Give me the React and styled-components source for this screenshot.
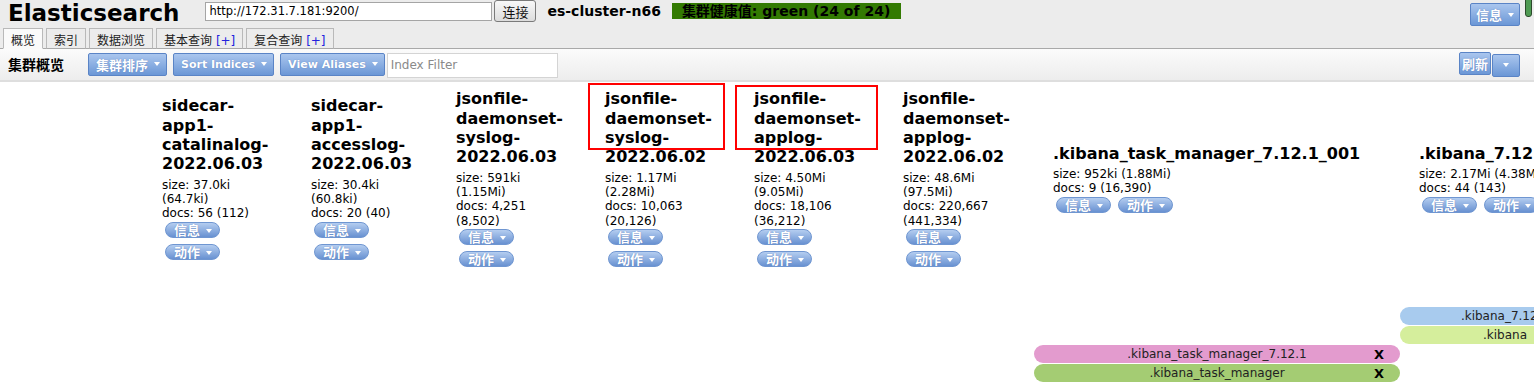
import React from 'react';
import styled, { createGlobalStyle } from 'styled-components';

const FONT = `"DejaVu Sans", "Noto Sans CJK SC", sans-serif`;

const Global = createGlobalStyle`
  html, body { margin: 0; padding: 0; background: #fff; overflow: hidden; }
  body { font-family: ${FONT}; font-size: 12px; color: #000; }
  * { box-sizing: border-box; }
`;

const Page = styled.div`
  position: relative;
  width: 1534px;
  height: 382px;
  overflow: hidden;
`;

const Header = styled.header`
  background: #ececec;
  display: flex;
  flex-direction: column;
`;

const TopBar = styled.div`
  display: flex;
  align-items: flex-start;
  height: 27px;
`;

const Title = styled.h1`
  margin: 0 26px 0 8px;
  font-size: 23px;
  line-height: 26px;
  font-weight: bold;
`;

const UrlInput = styled.div`
  width: 287px;
  height: 19px;
  margin-top: 2px;
  background: #fff;
  border: 1px solid #a5a5a5;
  font-size: 11.5px;
  line-height: 17px;
  padding-left: 3px;
  color: #000;
`;

const ConnectButton = styled.button`
  margin-left: 2px;
  margin-top: 0;
  width: 42px;
  height: 22px;
  border: 1px solid #7a7a7a;
  border-radius: 3px;
  background: linear-gradient(#f8f8f8, #dcdcdc);
  font-family: ${FONT};
  font-size: 13px;
  color: #111;
  padding: 0;
`;

const ClusterName = styled.span`
  margin-left: 11px;
  font-size: 14px;
  font-weight: bold;
  line-height: 22px;
`;

const Health = styled.span`
  margin-left: 11px;
  margin-top: 3px;
  height: 16px;
  padding: 0 11px 0 10px;
  background: ${p => p.$color};
  font-size: 14px;
  font-weight: bold;
  line-height: 16px;
  color: #000;
`;

const Spacer = styled.div`
  flex: 1;
`;

const TabBar = styled.nav`
  display: flex;
  align-items: flex-end;
  gap: 3px;
  height: 22px;
  padding-left: 3px;
  border-bottom: 1px solid #a9a9a9;
`;

const Tab = styled.div`
  height: 21px;
  padding: 4px 7px 0;
  margin-bottom: -1px;
  border: 1px solid #b9b9b9;
  border-bottom-color: ${p => (p.$active ? '#fafafa' : '#a9a9a9')};
  background: ${p => (p.$active ? '#fafafa' : '#ececec')};
  font-size: 12px;
  line-height: 16px;
  color: #222;
  white-space: nowrap;
`;

const Plus = styled.span`
  color: #2222dd;
`;

const Toolbar = styled.div`
  display: flex;
  align-items: center;
  height: 33px;
  padding: 0 14px 1px 8px;
  background: linear-gradient(#fbfbfb, #ededed);
  border-bottom: 2px solid #dedede;
`;

const ToolbarTitle = styled.span`
  font-size: 14px;
  font-weight: bold;
  margin-right: 24px;
`;

const BlueButton = styled.button`
  display: inline-flex;
  align-items: center;
  height: 23px;
  padding: 0 ${p => p.$pr ?? 6}px 0 ${p => p.$pl ?? 7}px;
  margin: ${p => p.$mt ?? 0}px ${p => p.$mr ?? 6}px 0 0;
  border: 1px solid #5a84c6;
  border-radius: 2px;
  background: linear-gradient(#aac6ee, #6b97d6);
  color: #fff;
  font-family: ${FONT};
  font-weight: bold;
  font-size: ${p => (p.$cjk ? 13 : 11)}px;
  text-shadow: 0 0 1px rgba(50, 80, 150, 0.6);
  white-space: nowrap;
`;

const Arrow = styled.span`
  display: inline-block;
  width: 0;
  height: 0;
  margin-left: ${p => p.$gap ?? 6}px;
  border-left: 3.5px solid transparent;
  border-right: 3.5px solid transparent;
  border-top: 4px solid #fff;
`;

const FilterInput = styled.div`
  width: 171px;
  height: 25px;
  margin-top: 2px;
  background: #fff;
  border: 1px solid #d4d4d4;
  color: #8a8a8a;
  font-size: 12px;
  line-height: 23px;
  padding-left: 3px;
`;

const SplitGroup = styled.div`
  display: flex;
  align-items: flex-start;
  height: 25px;
`;

const Board = styled.div`
  position: relative;
  display: grid;
  grid-template-columns: ${p => p.$cols};
  grid-template-rows: 192px 33px repeat(4, 19px);
  width: max-content;
`;

const IndexCell = styled.div`
  grid-row: 1;
  grid-column: ${p => p.$col};
  align-self: center;
  padding: 0 20px 0 19px;
`;

const IndexName = styled.div`
  font-size: 16px;
  font-weight: bold;
  line-height: 19.4px;
`;

const Stats = styled.div`
  margin-top: 4px;
  font-size: 12px;
  line-height: 14.3px;
`;

const Actions = styled.div`
  display: flex;
  flex-wrap: wrap;
  row-gap: 6px;
  column-gap: 7px;
  margin-top: 1px;
  padding-left: 3px;
`;

const Pill = styled.button`
  display: inline-flex;
  align-items: center;
  height: 16px;
  margin: 0;
  padding: 2px 7px 0 8px;
  overflow: hidden;
  border: 1px solid #6f96d1;
  border-radius: 8px;
  background: linear-gradient(#b4cdf0, #6891d1);
  color: #fff;
  font-family: ${FONT};
  font-weight: bold;
  font-size: 13px;
  line-height: 16px;
  text-shadow: 0 0 1px rgba(50, 80, 150, 0.6);
`;

const AliasBar = styled.div`
  grid-column: ${p => p.$col};
  grid-row: ${p => p.$row};
  align-self: start;
  display: grid;
  grid-template-columns: 30px 1fr 30px;
  align-items: center;
  height: 18px;
  border-radius: 9px;
  background: ${p => p.$bg};
  font-size: 12px;
  color: #222;
`;

const AliasName = styled.span`
  grid-column: 2;
  text-align: center;
  white-space: nowrap;
`;

const AliasClose = styled.span`
  grid-column: 3;
  padding-left: 4px;
  font-size: 13px;
  font-weight: bold;
  color: #000;
`;

const Highlight = styled.div`
  position: absolute;
  left: ${p => p.$x}px;
  top: ${p => p.$y}px;
  width: ${p => p.$w}px;
  height: ${p => p.$h}px;
  border: 2px solid #f00;
  pointer-events: none;
`;

const Handle = styled.div`
  position: absolute;
  left: 1525px;
  top: -3px;
  width: 7px;
  height: 20px;
  border: 1px solid #2c4a2c;
  border-radius: 3px;
  background: #4e9a52;
`;

const indices = [
  { name: 'sidecar-app1-catalinalog-2022.06.03', size: '37.0ki', total: '64.7ki', docs: '56', docsTotal: '112', w: 149 },
  { name: 'sidecar-app1-accesslog-2022.06.03', size: '30.4ki', total: '60.8ki', docs: '20', docsTotal: '40', w: 145 },
  { name: 'jsonfile-daemonset-syslog-2022.06.03', size: '591ki', total: '1.15Mi', docs: '4,251', docsTotal: '8,502', w: 149 },
  { name: 'jsonfile-daemonset-syslog-2022.06.02', size: '1.17Mi', total: '2.28Mi', docs: '10,063', docsTotal: '20,126', w: 149 },
  { name: 'jsonfile-daemonset-applog-2022.06.03', size: '4.50Mi', total: '9.05Mi', docs: '18,106', docsTotal: '36,212', w: 149 },
  { name: 'jsonfile-daemonset-applog-2022.06.02', size: '48.6Mi', total: '97.5Mi', docs: '220,667', docsTotal: '441,334', w: 150 },
  { name: '.kibana_task_manager_7.12.1_001', size: '952ki', total: '1.88Mi', docs: '9', docsTotal: '16,390', w: 366 },
  { name: '.kibana_7.12.1_001', size: '2.17Mi', total: '4.38Mi', docs: '44', docsTotal: '143', w: 210 },
];

const aliases = [
  { name: '.kibana_7.12.1', col: 9, row: 3, bg: '#a8cbee', close: true },
  { name: '.kibana', col: 9, row: 4, bg: '#d5ee9c', close: true },
  { name: '.kibana_task_manager_7.12.1', col: 8, row: 5, bg: '#e39bce', close: true },
  { name: '.kibana_task_manager', col: 8, row: 6, bg: '#a4cc73', close: true },
];

const tabs = [
  { label: '概览', active: true },
  { label: '索引' },
  { label: '数据浏览' },
  { label: '基本查询', plus: true },
  { label: '复合查询', plus: true },
];

export default function App() {
  const cols = `143px ${indices.map(i => `${i.w}px`).join(' ')}`;
  return (
    <Page>
      <Global />
      <Header>
        <TopBar>
          <Title>Elasticsearch</Title>
          <UrlInput>http://172.31.7.181:9200/</UrlInput>
          <ConnectButton>连接</ConnectButton>
          <ClusterName>es-cluster-n66</ClusterName>
          <Health $color="#337a02">集群健康值: green (24 of 24)</Health>
          <Spacer />
          <BlueButton $cjk $mt={3} $mr={14} $pl={5} $pr={5}>
            信息<Arrow $gap={6} />
          </BlueButton>
        </TopBar>
        <TabBar>
          {tabs.map(t => (
            <Tab key={t.label} $active={t.active}>
              {t.label}
              {t.plus && <Plus> [+]</Plus>}
            </Tab>
          ))}
        </TabBar>
      </Header>
      <Toolbar>
        <ToolbarTitle>集群概览</ToolbarTitle>
        <BlueButton $cjk>
          集群排序<Arrow />
        </BlueButton>
        <BlueButton>
          Sort Indices<Arrow />
        </BlueButton>
        <BlueButton $mr={2}>
          View Aliases<Arrow />
        </BlueButton>
        <FilterInput>Index Filter</FilterInput>
        <Spacer />
        <SplitGroup>
          <BlueButton $cjk $mr={1} $pl={2} $pr={2}>刷新</BlueButton>
          <BlueButton $mr={0} $mt={2} $pl={10} $pr={10}>
            <Arrow $gap={0} />
          </BlueButton>
        </SplitGroup>
      </Toolbar>
      <Board $cols={cols}>
        {indices.map((ix, i) => (
          <IndexCell key={ix.name} $col={i + 2}>
            <IndexName>{ix.name}</IndexName>
            <Stats>
              size: {ix.size} ({ix.total})
              <br />
              docs: {ix.docs} ({ix.docsTotal})
            </Stats>
            <Actions>
              <Pill>
                信息<Arrow />
              </Pill>
              <Pill>
                动作<Arrow />
              </Pill>
            </Actions>
          </IndexCell>
        ))}
        {aliases.map(a => (
          <AliasBar key={a.name} $col={a.col} $row={a.row} $bg={a.bg}>
            <AliasName>{a.name}</AliasName>
            {a.close && <AliasClose>X</AliasClose>}
          </AliasBar>
        ))}
        <Highlight $x={588} $y={1} $w={137} $h={67} />
        <Highlight $x={735} $y={3} $w={143} $h={65} />
      </Board>
      <Handle />
    </Page>
  );
}
